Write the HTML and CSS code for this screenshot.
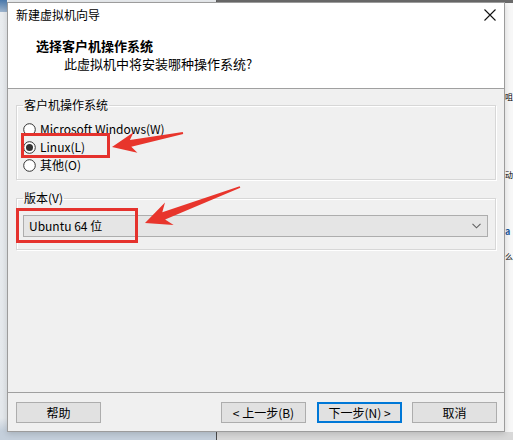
FILE: index.html
```html
<!DOCTYPE html>
<html lang="zh-CN">
<head>
<meta charset="utf-8">
<title>新建虚拟机向导</title>
<link rel="stylesheet" href="styles.css">
</head>
<body>
<div class="desk">
  <div class="corner"></div>
  <div class="bgwin">
    <div class="bgtext">
      <div class="bgline l1">咀</div>
      <div class="bgline l2">动</div>
      <div class="bgline l3">a</div>
      <div class="bgline l4">么</div>
    </div>
  </div>

  <div class="dialog">
    <div class="titlebar">
      <span class="title">新建虚拟机向导</span>
      <svg class="close" width="12" height="12" viewBox="0 0 12 12"><path d="M0.5 0.5 L11.5 11.5 M11.5 0.5 L0.5 11.5" stroke="#111" stroke-width="1.1" fill="none"/></svg>
    </div>
    <div class="header">
      <div class="h-title">选择客户机操作系统</div>
      <div class="h-sub">此虚拟机中将安装哪种操作系统?</div>
    </div>
    <div class="content">
      <fieldset class="group g1">
        <legend>客户机操作系统</legend>
        <div class="radio">
          <svg width="13" height="13" viewBox="0 0 13 13"><circle cx="6.5" cy="6.5" r="5.8" fill="#fff" stroke="#333" stroke-width="1"/></svg>
          <span>Microsoft Windows(W)</span>
        </div>
        <div class="radio">
          <svg width="13" height="13" viewBox="0 0 13 13"><circle cx="6.5" cy="6.5" r="5.8" fill="#fff" stroke="#333" stroke-width="1"/><circle cx="6.5" cy="6.5" r="3.5" fill="#333"/></svg>
          <span>Linux(L)</span>
        </div>
        <div class="radio">
          <svg width="13" height="13" viewBox="0 0 13 13"><circle cx="6.5" cy="6.5" r="5.8" fill="#fff" stroke="#333" stroke-width="1"/></svg>
          <span>其他(O)</span>
        </div>
      </fieldset>
      <fieldset class="group g2">
        <legend>版本(V)</legend>
        <div class="combo">
          <span>Ubuntu 64 位</span>
          <svg width="9" height="6" viewBox="0 0 9 6"><path d="M0.5 0.8 L4.5 4.8 L8.5 0.8" stroke="#606060" stroke-width="1.1" fill="none"/></svg>
        </div>
      </fieldset>
    </div>
    <div class="footer">
      <button class="btn">帮助</button>
      <div class="nav">
        <button class="btn">&lt; 上一步(B)</button>
        <button class="btn focus">下一步(N) &gt;</button>
        <button class="btn cancel">取消</button>
      </div>
    </div>
  </div>

  <div class="mark m1"></div>
  <div class="mark m2"></div>
  <svg class="arrows" width="513" height="440" viewBox="0 0 513 440">
    <polygon fill="#e8352c" points="112,147 137.4,152.8 131.3,146.7 183.2,133.9 182.8,132.1 129.9,139.9 133.6,132.2"/>
    <polygon fill="#e8352c" points="145,223 173.6,225 165.1,219.6 240.3,187.8 239.7,186.2 162.3,212.2 165,202.5"/>
  </svg>
</div>
</body>
</html>
```

FILE: styles.css
```css
* { box-sizing: border-box; }
html, body { margin: 0; padding: 0; }
body {
  width: 513px;
  height: 440px;
  overflow: hidden;
  font-family: "Noto Sans CJK SC", "Microsoft YaHei", sans-serif;
  font-size: 12px;
  color: #000;
  background: #e4e8ec;
}
.desk {
  position: relative;
  width: 513px;
  height: 440px;
  overflow: hidden;
  background: linear-gradient(#e9ecef, #e4e8ec 95%, #c4cfdb 98%);
}
.corner {
  position: absolute;
  left: 0;
  top: 0;
  width: 7px;
  height: 12px;
  background: linear-gradient(#4a78aa, #9fb6cf);
}
.bgwin {
  position: absolute;
  left: 216px;
  top: 0;
  width: 320px;
  height: 440px;
  background: #f7f7f7;
  border-left: 1px solid #4a4a4a;
  border-top: 3px solid #6a6a6a;
}
.bgwin::after {
  content: "";
  position: absolute;
  left: 0;
  right: 0;
  bottom: 0;
  height: 8px;
  background: #d8d8d8;
}
.bgtext {
  position: absolute;
  left: 288px;
  top: 0;
  width: 9px;
  font-size: 8px;
  line-height: 10px;
}
.bgline { position: absolute; left: 0; white-space: nowrap; }
.l1 { top: 89px; }
.l2 { top: 167px; }
.l3 { top: 224px; color: #1f5a9c; font-weight: bold; font-size: 9px; }
.l4 { top: 249px; }

.dialog {
  position: absolute;
  left: 7px;
  top: 2px;
  width: 498px;
  height: 430px;
  border: 1px solid #9c9c9c;
  background: #f0f0f0;
  display: flex;
  flex-direction: column;
  box-shadow: 0 2px 6px rgba(0,0,0,0.15);
}
.titlebar {
  height: 24px;
  background: #fff;
  display: flex;
  align-items: center;
  justify-content: space-between;
  padding: 0 8px 0 8px;
  line-height: 24px;
}
.close { display: block; }
.header {
  background: #fff;
  padding: 10px 0 15px 0;
  border-bottom: 1px solid #a0a0a0;
  font-size: 13px;
  line-height: 18px;
}
.h-title { font-weight: bold; padding-left: 28px; }
.h-sub { padding-left: 56px; }

.content {
  flex: 1;
  padding: 7px 8px 0 8px;
}
.group {
  margin: 0;
  border: 1px solid #d7d7d7;
  box-shadow: 1px 1px 0 #fff inset, 1px 1px 0 #fff;
  min-width: 0;
}
.group legend {
  padding: 0 1px;
  line-height: 18px;
}
.g1 { padding: 6px 7px 5px 6px; }
.g2 { margin-top: 9px; padding: 8px 7px 12px 6px; }
.radio {
  display: flex;
  align-items: center;
  gap: 4px;
  height: 18px;
  line-height: 18px;
}
.radio svg { display: block; }
.combo {
  height: 22px;
  background: #e5e5e5;
  border: 1px solid #adadad;
  display: flex;
  align-items: center;
  justify-content: space-between;
  padding: 0 5px 0 5px;
  line-height: 20px;
}
.combo svg { display: block; margin-right: 1px; }

.footer {
  border-top: 1px solid #a0a0a0;
  padding: 9px 7px 8px 8px;
  display: flex;
  justify-content: space-between;
}
.nav { display: flex; gap: 11px; }
.btn {
  width: 85px;
  height: 21px;
  padding: 0;
  margin: 0;
  font-family: inherit;
  font-size: 12px;
  line-height: 19px;
  color: #000;
  background: #e1e1e1;
  border: 1px solid #adadad;
}
.btn.focus { border: 2px solid #0078d7; line-height: 17px; }
.btn.cancel { margin-left: -1px; }

.mark {
  position: absolute;
  border: 3px solid #e5322d;
}
.m1 { left: 21px; top: 133px; width: 89px; height: 25px; }
.m2 { left: 16px; top: 208px; width: 122px; height: 35px; }
.arrows { position: absolute; left: 0; top: 0; pointer-events: none; }
```
